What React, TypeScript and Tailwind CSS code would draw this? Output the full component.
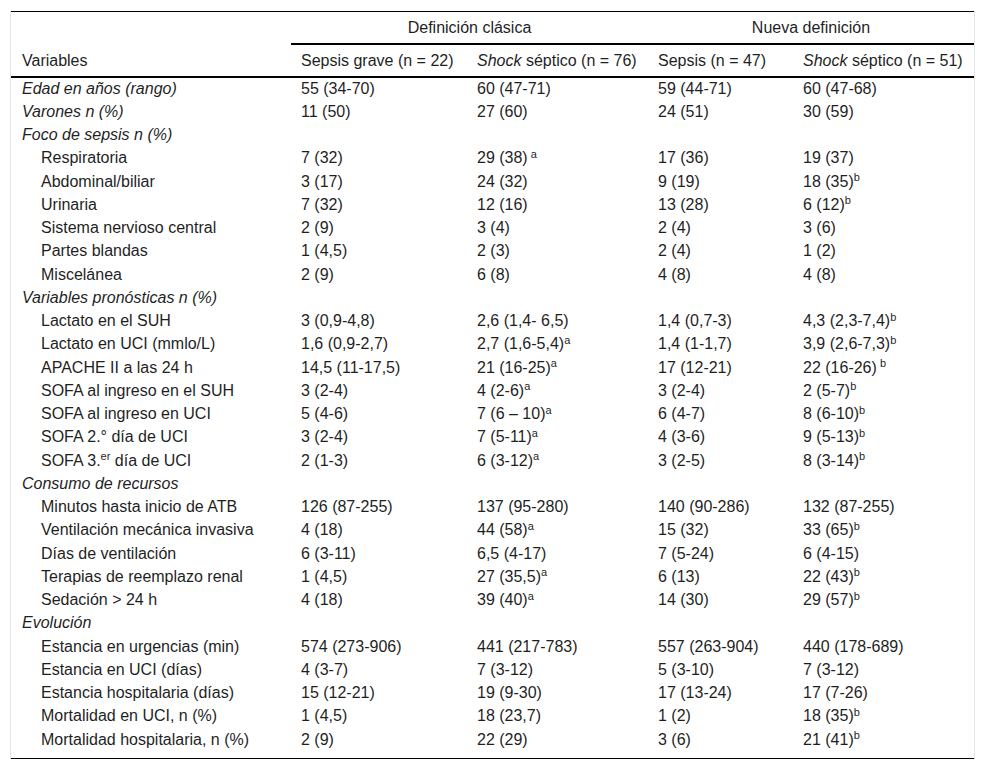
type Cell = { v: string; sup?: string; gap?: boolean }

type Row =
  | { kind: "group"; label: string }
  | { kind: "data"; label: React.ReactNode; indent?: boolean; italic?: boolean; cells: Cell[] }

const c = (v: string, sup?: string, gap?: boolean): Cell => ({ v, sup, gap })

const rows: Row[] = [
  { kind: "data", label: "Edad en años (rango)", italic: true, cells: [c("55 (34-70)"), c("60 (47-71)"), c("59 (44-71)"), c("60 (47-68)")] },
  { kind: "data", label: "Varones n (%)", italic: true, cells: [c("11 (50)"), c("27 (60)"), c("24 (51)"), c("30 (59)")] },
  { kind: "group", label: "Foco de sepsis n (%)" },
  { kind: "data", label: "Respiratoria", indent: true, cells: [c("7 (32)"), c("29 (38)", "a", true), c("17 (36)"), c("19 (37)")] },
  { kind: "data", label: "Abdominal/biliar", indent: true, cells: [c("3 (17)"), c("24 (32)"), c("9 (19)"), c("18 (35)", "b")] },
  { kind: "data", label: "Urinaria", indent: true, cells: [c("7 (32)"), c("12 (16)"), c("13 (28)"), c("6 (12)", "b")] },
  { kind: "data", label: "Sistema nervioso central", indent: true, cells: [c("2 (9)"), c("3 (4)"), c("2 (4)"), c("3 (6)")] },
  { kind: "data", label: "Partes blandas", indent: true, cells: [c("1 (4,5)"), c("2 (3)"), c("2 (4)"), c("1 (2)")] },
  { kind: "data", label: "Miscelánea", indent: true, cells: [c("2 (9)"), c("6 (8)"), c("4 (8)"), c("4 (8)")] },
  { kind: "group", label: "Variables pronósticas n (%)" },
  { kind: "data", label: "Lactato en el SUH", indent: true, cells: [c("3 (0,9-4,8)"), c("2,6 (1,4- 6,5)"), c("1,4 (0,7-3)"), c("4,3 (2,3-7,4)", "b")] },
  { kind: "data", label: "Lactato en UCI (mmlo/L)", indent: true, cells: [c("1,6 (0,9-2,7)"), c("2,7 (1,6-5,4)", "a"), c("1,4 (1-1,7)"), c("3,9 (2,6-7,3)", "b")] },
  { kind: "data", label: "APACHE II a las 24 h", indent: true, cells: [c("14,5 (11-17,5)"), c("21 (16-25)", "a"), c("17 (12-21)"), c("22 (16-26)", "b", true)] },
  { kind: "data", label: "SOFA al ingreso en el SUH", indent: true, cells: [c("3 (2-4)"), c("4 (2-6)", "a"), c("3 (2-4)"), c("2 (5-7)", "b")] },
  { kind: "data", label: "SOFA al ingreso en UCI", indent: true, cells: [c("5 (4-6)"), c("7 (6 – 10)", "a"), c("6 (4-7)"), c("8 (6-10)", "b")] },
  { kind: "data", label: "SOFA 2.° día de UCI", indent: true, cells: [c("3 (2-4)"), c("7 (5-11)", "a"), c("4 (3-6)"), c("9 (5-13)", "b")] },
  {
    kind: "data",
    label: (
      <>
        SOFA 3.<sup className="text-[11px]">er</sup> día de UCI
      </>
    ),
    indent: true,
    cells: [c("2 (1-3)"), c("6 (3-12)", "a"), c("3 (2-5)"), c("8 (3-14)", "b")],
  },
  { kind: "group", label: "Consumo de recursos" },
  { kind: "data", label: "Minutos hasta inicio de ATB", indent: true, cells: [c("126 (87-255)"), c("137 (95-280)"), c("140 (90-286)"), c("132 (87-255)")] },
  { kind: "data", label: "Ventilación mecánica invasiva", indent: true, cells: [c("4 (18)"), c("44 (58)", "a"), c("15 (32)"), c("33 (65)", "b")] },
  { kind: "data", label: "Días de ventilación", indent: true, cells: [c("6 (3-11)"), c("6,5 (4-17)"), c("7 (5-24)"), c("6 (4-15)")] },
  { kind: "data", label: "Terapias de reemplazo renal", indent: true, cells: [c("1 (4,5)"), c("27 (35,5)", "a"), c("6 (13)"), c("22 (43)", "b")] },
  { kind: "data", label: "Sedación > 24 h", indent: true, cells: [c("4 (18)"), c("39 (40)", "a"), c("14 (30)"), c("29 (57)", "b")] },
  { kind: "group", label: "Evolución" },
  { kind: "data", label: "Estancia en urgencias (min)", indent: true, cells: [c("574 (273-906)"), c("441 (217-783)"), c("557 (263-904)"), c("440 (178-689)")] },
  { kind: "data", label: "Estancia en UCI (días)", indent: true, cells: [c("4 (3-7)"), c("7 (3-12)"), c("5 (3-10)"), c("7 (3-12)")] },
  { kind: "data", label: "Estancia hospitalaria (días)", indent: true, cells: [c("15 (12-21)"), c("19 (9-30)"), c("17 (13-24)"), c("17 (7-26)")] },
  { kind: "data", label: "Mortalidad en UCI, n (%)", indent: true, cells: [c("1 (4,5)"), c("18 (23,7)"), c("1 (2)"), c("18 (35)", "b")] },
  { kind: "data", label: "Mortalidad hospitalaria, n (%)", indent: true, cells: [c("2 (9)"), c("22 (29)"), c("3 (6)"), c("21 (41)", "b")] },
]

function Value({ cell }: { cell: Cell }) {
  return (
    <>
      {cell.v}
      {cell.sup && (
        <sup className="text-[11px]">
          {cell.gap ? " " : ""}
          {cell.sup}
        </sup>
      )}
    </>
  )
}

export default function App() {
  return (
    <div className="min-h-[770px] bg-white pt-[11px] font-['Liberation_Sans',Arial,sans-serif] text-[16px] leading-[19px] text-[#1f1f1f]">
      <div className="ml-[10px] w-[965px] border-x border-[#e4e4e4]">
        <table className="w-full table-fixed border-collapse text-left">
          <colgroup>
            <col className="w-[280px]" />
            <col className="w-[176px]" />
            <col className="w-[181px]" />
            <col className="w-[145px]" />
            <col />
          </colgroup>
          <thead>
            <tr className="h-[32px] border-t border-black">
              <th rowSpan={2} className="border-b-2 border-black pb-[6px] pl-[11px] align-bottom font-normal">
                Variables
              </th>
              <th colSpan={2} className="border-b-2 border-black text-center font-normal">
                Definición clásica
              </th>
              <th colSpan={2} className="border-b-2 border-black text-center font-normal">
                Nueva definición
              </th>
            </tr>
            <tr className="h-[33px] border-b-2 border-black">
              <th className="pl-[10px] font-normal">Sepsis grave (n = 22)</th>
              <th className="pl-[10px] font-normal">
                <i>Shock</i> séptico (n = 76)
              </th>
              <th className="pl-[10px] font-normal">Sepsis (n = 47)</th>
              <th className="pl-[10px] font-normal">
                <i>Shock</i> séptico (n = 51)
              </th>
            </tr>
          </thead>
          <tbody className="border-b border-black">
            {rows.map((r, i) =>
              r.kind === "group" ? (
                <tr key={i} className="h-[23.25px]">
                  <td colSpan={5} className="pl-[11px] italic">
                    {r.label}
                  </td>
                </tr>
              ) : (
                <tr key={i} className="h-[23.25px]">
                  <td className={r.indent ? "pl-[30px]" : r.italic ? "pl-[11px] italic" : "pl-[11px]"}>{r.label}</td>
                  {r.cells.map((cell, j) => (
                    <td key={j} className="pl-[10px]">
                      <Value cell={cell} />
                    </td>
                  ))}
                </tr>
              )
            )}
            <tr className="h-[8px]">
              <td colSpan={5} />
            </tr>
          </tbody>
        </table>
      </div>
    </div>
  )
}
